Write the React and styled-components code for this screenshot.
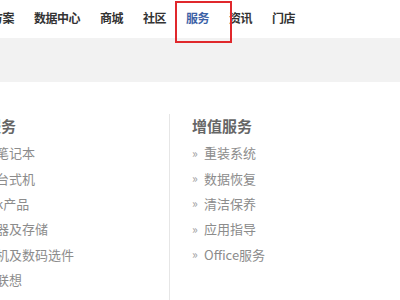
import React from "react";
import styled, { createGlobalStyle } from "styled-components";

const Global = createGlobalStyle`
  html, body { margin: 0; padding: 0; background: #fff; }
  body { font-family: "Noto Sans CJK SC", "Noto Sans", sans-serif; overflow: hidden; }
  #root { width: 400px; height: 300px; overflow: hidden; }
`;

const Page = styled.div`
  width: 400px;
  height: 300px;
  overflow: hidden;
  display: flex;
  flex-direction: column;
`;

const Nav = styled.nav`
  height: 38px;
  display: flex;
  align-items: flex-start;
  gap: 20px;
  margin-left: -9px;
  flex-shrink: 0;
`;

const NavItem = styled.a`
  position: relative;
  font-size: 12px;
  font-weight: 700;
  letter-spacing: -0.5px;
  line-height: 35px;
  white-space: nowrap;
  color: ${(p) => (p.$active ? "#3d62a6" : "#333")};
  text-decoration: none;
  ${(p) =>
    p.$highlight &&
    `
    &::after {
      content: "";
      position: absolute;
      left: -11px;
      top: 1px;
      width: 57px;
      height: 42px;
      box-sizing: border-box;
      border: 2px solid #e0282c;
      z-index: 2;
    }
  `}
`;

const Band = styled.div`
  height: 44px;
  background: #f2f2f2;
  flex-shrink: 0;
`;

const Content = styled.div`
  flex: 1;
  display: flex;
  padding-top: 32px;
  margin-left: -20px;
`;

const Column = styled.div`
  display: flex;
  flex-direction: column;
  width: ${(p) => p.$width}px;
  flex-shrink: 0;
  box-sizing: border-box;
  padding-left: ${(p) => p.$pad}px;
  ${(p) => p.$divider && `border-left: 1px solid #e6e6e6;`}
`;

const Heading = styled.h3`
  margin: 0 0 2px ${(p) => p.$shift || 0}px;
  font-size: 15px;
  font-weight: 700;
  line-height: 24px;
  color: #666;
  white-space: nowrap;
`;

const List = styled.ul`
  list-style: none;
  margin: 0;
  padding: 0;
`;

const Item = styled.li`
  display: flex;
  align-items: center;
  gap: 6px;
  height: 25.4px;
  font-size: 13px;
  color: #8c8c8c;
  white-space: nowrap;
`;

const Arrow = styled.span`
  font-size: 12px;
  color: #a0a0a0;
  width: 6px;
  line-height: 1;
`;

const navItems = ["方案", "数据中心", "商城", "社区", "服务", "资讯", "门店"];
const leftItems = ["笔记本", "台式机", "k产品", "器及存储", "机及数码选件", "联想", "其他"];
const rightItems = ["重装系统", "数据恢复", "清洁保养", "应用指导", "Office服务"];

export default function App() {
  return (
    <Page>
      <Global />
      <Nav>
        {navItems.map((n) => (
          <NavItem key={n} $active={n === "服务"} $highlight={n === "服务"}>
            {n}
          </NavItem>
        ))}
      </Nav>
      <Band />
      <Content>
        <Column $width={189} $pad={16}>
          <Heading $shift={-10}>服务</Heading>
          <List>
            {leftItems.map((t) => (
              <Item key={t}>{t}</Item>
            ))}
          </List>
        </Column>
        <Column $width={240} $pad={22} $divider>
          <Heading>增值服务</Heading>
          <List>
            {rightItems.map((t) => (
              <Item key={t}>
                <Arrow>»</Arrow>
                {t}
              </Item>
            ))}
          </List>
        </Column>
      </Content>
    </Page>
  );
}
